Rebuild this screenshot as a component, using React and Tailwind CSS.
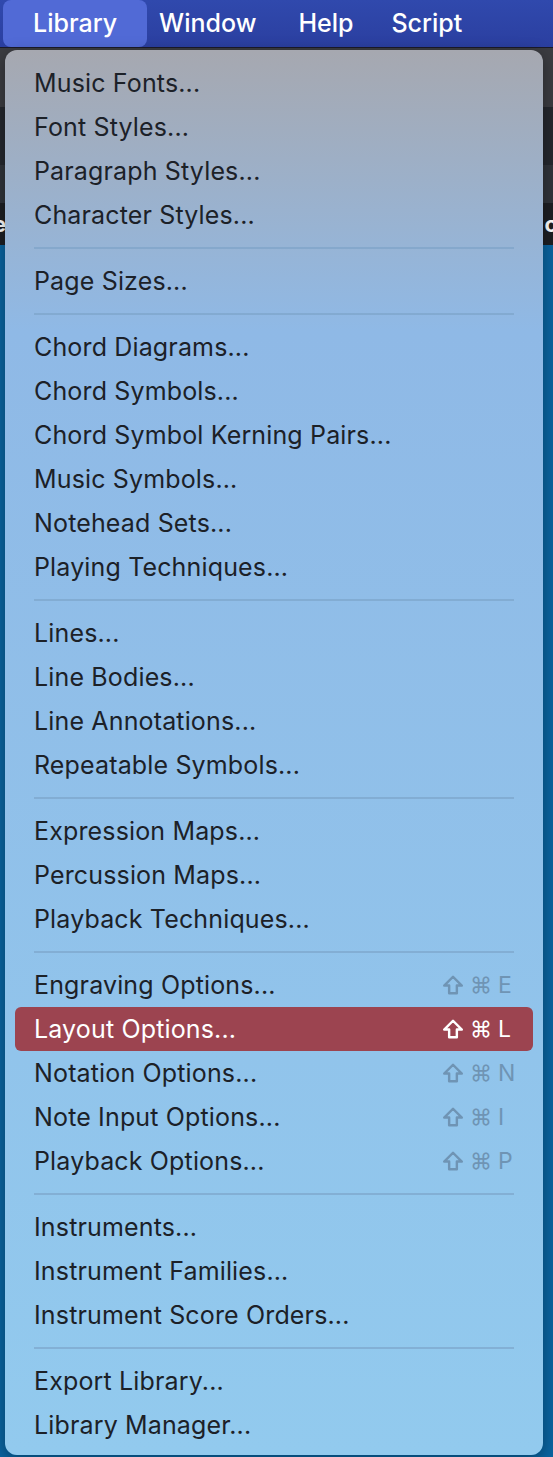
const groups = [
  ['Music Fonts...', 'Font Styles...', 'Paragraph Styles...', 'Character Styles...'],
  ['Page Sizes...'],
  ['Chord Diagrams...', 'Chord Symbols...', 'Chord Symbol Kerning Pairs...', 'Music Symbols...', 'Notehead Sets...', 'Playing Techniques...'],
  ['Lines...', 'Line Bodies...', 'Line Annotations...', 'Repeatable Symbols...'],
  ['Expression Maps...', 'Percussion Maps...', 'Playback Techniques...'],
  [
    { label: 'Engraving Options...', key: 'E' },
    { label: 'Layout Options...', key: 'L', active: true },
    { label: 'Notation Options...', key: 'N' },
    { label: 'Note Input Options...', key: 'I' },
    { label: 'Playback Options...', key: 'P' },
  ],
  ['Instruments...', 'Instrument Families...', 'Instrument Score Orders...'],
  ['Export Library...', 'Library Manager...'],
];

const font = { fontFamily: 'Inter, "Noto Sans", sans-serif' };

function ShiftIcon({ className }) {
  return (
    <svg viewBox="0 0 20 20" className={className} fill="none" stroke="currentColor" strokeWidth="2.2" strokeLinejoin="round">
      <path d="M10 2.5 L18 10.5 H13.5 V17.5 H6.5 V10.5 H2 Z" />
    </svg>
  );
}

function Item({ item }) {
  const it = typeof item === 'string' ? { label: item } : item;
  return (
    <div
      className={`mx-[10px] h-[44px] px-[19px] rounded-[6px] flex items-center justify-between text-[25px] ${
        it.active ? 'bg-[#9c4450] text-white' : 'text-[#1c2128]'
      }`}
    >
      <span className="pt-[2px] tracking-[0.15px]">{it.label}</span>
      {it.key && (
        <span className={`flex items-center gap-[6px] ${it.active ? 'text-white' : 'text-[#6f94b4]'}`}>
          <ShiftIcon className="w-[22px] h-[22px]" />
          <span className="text-[22px]">⌘</span>
          <span className="w-[16px] text-[23px]">{it.key}</span>
        </span>
      )}
    </div>
  );
}

export default function App() {
  return (
    <div className="w-[553px] h-[1457px] relative overflow-hidden bg-[#0a64a0]" style={font}>
      {/* menu bar */}
      <div className="h-[48px] bg-gradient-to-b from-[#3049ad] to-[#2b3fa0] border-b border-[#1a1a2a] flex items-center text-white text-[25px] font-medium">
        <div className="ml-[3px] h-[47px] px-[30px] flex items-center rounded-[8px] bg-[#516ad6]">Library</div>
        <div className="px-[12px]">Window</div>
        <div className="px-[30px]">Help</div>
        <div className="px-[8px]">Script</div>
      </div>
      {/* window behind */}
      <div className="h-[59px] bg-[#3b3c41]" />
      <div className="h-[58px] bg-[#25282e]" />
      <div className="h-[38px] bg-[#30343a]" />
      <div className="h-[42px] bg-[#1d1f23] flex items-center justify-between text-white font-bold text-[22px]">
        <span className="-ml-[7px]">e</span>
        <span className="-mr-[5px]">o</span>
      </div>

      {/* dropdown */}
      <div className="absolute left-[5px] top-[50px] w-[538px] h-[1405px] rounded-[12px] bg-gradient-to-b from-[#a6a8b0] via-[#8fb9e6] via-20% to-[#92caee] pt-[11px] shadow-[0_4px_16px_rgba(0,0,0,0.35)]">
        {groups.map((g, gi) => (
          <div key={gi}>
            {gi > 0 && <div className="mx-[29px] my-[10px] h-[2px] bg-[#7aa0c4]/60" />}
            {g.map((item, i) => (
              <Item key={i} item={item} />
            ))}
          </div>
        ))}
      </div>
    </div>
  );
}
